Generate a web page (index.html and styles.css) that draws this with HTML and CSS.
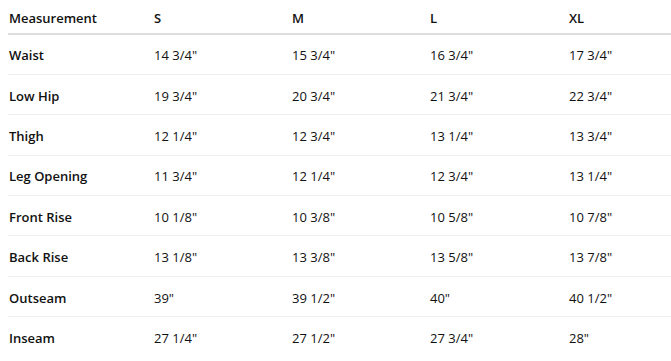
FILE: index.html
```html
<!DOCTYPE html>
<html lang="en">
<head>
  <meta charset="UTF-8">
  <meta name="viewport" content="width=device-width, initial-scale=1.0">
  <title>Size Chart</title>
  <link rel="stylesheet" href="styles.css">
</head>
<body>
  <!-- Size chart table -->
  <table class="size-chart">
    <colgroup>
      <col class="w-name">
      <col class="w-size">
      <col class="w-size">
      <col class="w-size-l">
      <col>
    </colgroup>
    <thead>
      <tr>
        <th>Measurement</th>
        <th>S</th>
        <th>M</th>
        <th>L</th>
        <th>XL</th>
      </tr>
    </thead>
    <tbody>
      <tr><td class="col-name">Waist</td><td>14 3/4"</td><td>15 3/4"</td><td>16 3/4"</td><td>17 3/4"</td></tr>
      <tr><td class="col-name">Low Hip</td><td>19 3/4"</td><td>20 3/4"</td><td>21 3/4"</td><td>22 3/4"</td></tr>
      <tr><td class="col-name">Thigh</td><td>12 1/4"</td><td>12 3/4"</td><td>13 1/4"</td><td>13 3/4"</td></tr>
      <tr><td class="col-name">Leg Opening</td><td>11 3/4"</td><td>12 1/4"</td><td>12 3/4"</td><td>13 1/4"</td></tr>
      <tr><td class="col-name">Front Rise</td><td>10 1/8"</td><td>10 3/8"</td><td>10 5/8"</td><td>10 7/8"</td></tr>
      <tr><td class="col-name">Back Rise</td><td>13 1/8"</td><td>13 3/8"</td><td>13 5/8"</td><td>13 7/8"</td></tr>
      <tr><td class="col-name">Outseam</td><td>39"</td><td>39 1/2"</td><td>40"</td><td>40 1/2"</td></tr>
      <tr><td class="col-name">Inseam</td><td>27 1/4"</td><td>27 1/2"</td><td>27 3/4"</td><td>28"</td></tr>
    </tbody>
  </table>
</body>
</html>
```

FILE: styles.css
```css
* {
  margin: 0;
  padding: 0;
  box-sizing: border-box;
}

html,
body {
  overflow: hidden;
}

body {
  font-family: "Open Sans", "Noto Sans", Arial, sans-serif;
  font-size: 13px;
  color: #111;
  background: #fff;
  padding-left: 8px;
}

.size-chart {
  width: 100%;
  border-collapse: collapse;
  table-layout: fixed;
}

.w-name {
  width: 145px;
}

.w-size {
  width: 138px;
}

.w-size-l {
  width: 139px;
}

.size-chart th,
.size-chart td {
  text-align: left;
  padding: 0 0 0 1px;
}

.size-chart th {
  height: 34px;
  padding-top: 3px;
  font-weight: 600;
  border-bottom: 2px solid #ddd;
}

.size-chart td {
  height: 40.4px;
  padding-top: 2px;
  border-bottom: 1px solid #eee;
}

.size-chart td.col-name {
  font-weight: 600;
}

.size-chart tbody tr:last-child td {
  border-bottom: none;
}
```
